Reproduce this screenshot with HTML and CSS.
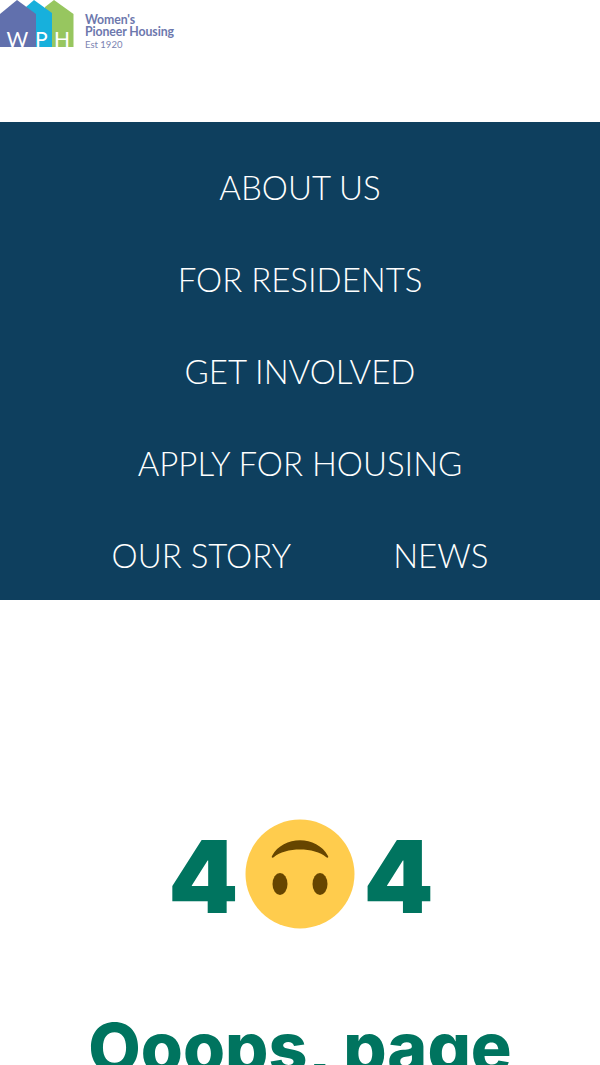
FILE: index.html
```html
<!DOCTYPE html>
<html lang="en">
<head>
  <meta charset="UTF-8" />
  <meta name="viewport" content="width=device-width, initial-scale=1.0"/>
  <title>Page not found - Women's Pioneer Housing</title>
  <link rel="stylesheet" href="styles.css">
</head>
<body>
  <header class="site-header">
    <a class="logo" href="#">
      <svg class="logo-mark" width="74" height="56" viewBox="0 0 74 56" aria-hidden="true">
        <path d="M45 7 L54 0 L73.5 14 L73.5 47 L50 47 L45 20 Z" fill="#97c65f"/>
        <path d="M26 7 L34 0 L52 13 L52 47 L30 47 Z" fill="#17b0dc"/>
        <path d="M17 0 L36 14 L36 47 L0 47 L0 14 Z" fill="#6170ad"/>
        <text class="logo-wph" x="6.5" y="47">W</text>
        <text class="logo-wph" x="35" y="47">P</text>
        <text class="logo-wph" x="54" y="47">H</text>
      </svg>
      <span class="logo-text">Women's<br>Pioneer Housing<br><small class="logo-est">Est 1920</small></span>
    </a>
  </header>

  <nav class="main-nav">
    <a href="#">ABOUT US</a>
    <a href="#">FOR RESIDENTS</a>
    <a href="#">GET INVOLVED</a>
    <a href="#">APPLY FOR HOUSING</a>
    <a href="#">OUR STORY</a>
    <a href="#">NEWS</a>
  </nav>

  <main class="not-found">
    <div class="code">
      <span class="digit">4</span>
      <svg class="face" width="110" height="110" viewBox="0 0 110 110" role="img" aria-label="0">
        <circle cx="55" cy="55" r="54.5" fill="#ffcc4d"/>
        <ellipse cx="35" cy="65" rx="7.5" ry="11" fill="#664500"/>
        <ellipse cx="75" cy="65" rx="7.5" ry="11" fill="#664500"/>
        <path d="M27 37 C 38 16, 72 16, 83 37 C 84 39, 82 39, 81 38 C 70 28, 40 28, 29 38 C 28 39, 26 39, 27 37 Z" fill="#664500"/>
      </svg>
      <span class="digit">4</span>
    </div>
    <h1>Ooops, page not found</h1>
  </main>
</body>
</html>
```

FILE: styles.css
```css
html, body {
  height: 1065px;
}

body {
  margin: 0;
  overflow: hidden;
  background: #fff;
  font-family: "Lato", "Noto Sans", sans-serif;
}

a {
  text-decoration: none;
}

.site-header {
  height: 122px;
}

.logo {
  display: flex;
  align-items: flex-start;
  gap: 11px;
  height: 56px;
}

.logo-mark {
  flex: none;
}

.logo-wph {
  font-family: "Lato", sans-serif;
  font-size: 21px;
  fill: #fff;
}

.logo-text {
  display: block;
  padding-top: 14px;
  color: #6d78ad;
  font-size: 12.3px;
  line-height: 12px;
  font-weight: 700;
  letter-spacing: -0.1px;
}

.logo-est {
  display: inline-block;
  font-size: 9.5px;
  font-weight: 400;
  letter-spacing: 0;
  color: #7b84b2;
}

.main-nav {
  display: flex;
  flex-wrap: wrap;
  justify-content: center;
  align-content: flex-start;
  padding-top: 19px;
  height: 459px;
  background: #0e3f5e;
}

.main-nav a {
  padding: 0 51px;
  color: #fff;
  font-family: "Lato", sans-serif;
  font-size: 33px;
  font-weight: 300;
  line-height: 92px;
}

.not-found {
  padding-top: 219px;
  text-align: center;
  color: #00745f;
}

.code {
  display: flex;
  justify-content: center;
  align-items: center;
  gap: 7px;
  height: 110px;
  padding-left: 2px;
  font-family: "Inter", sans-serif;
  font-size: 100px;
  font-weight: 900;
}

.digit {
  margin-top: 4px;
}

.face {
  margin: 0 2px 0 -1px;
}

h1 {
  margin: 78px 60px 0;
  font-family: "Inter", sans-serif;
  font-size: 68px;
  font-weight: 800;
  line-height: 80px;
}
```
